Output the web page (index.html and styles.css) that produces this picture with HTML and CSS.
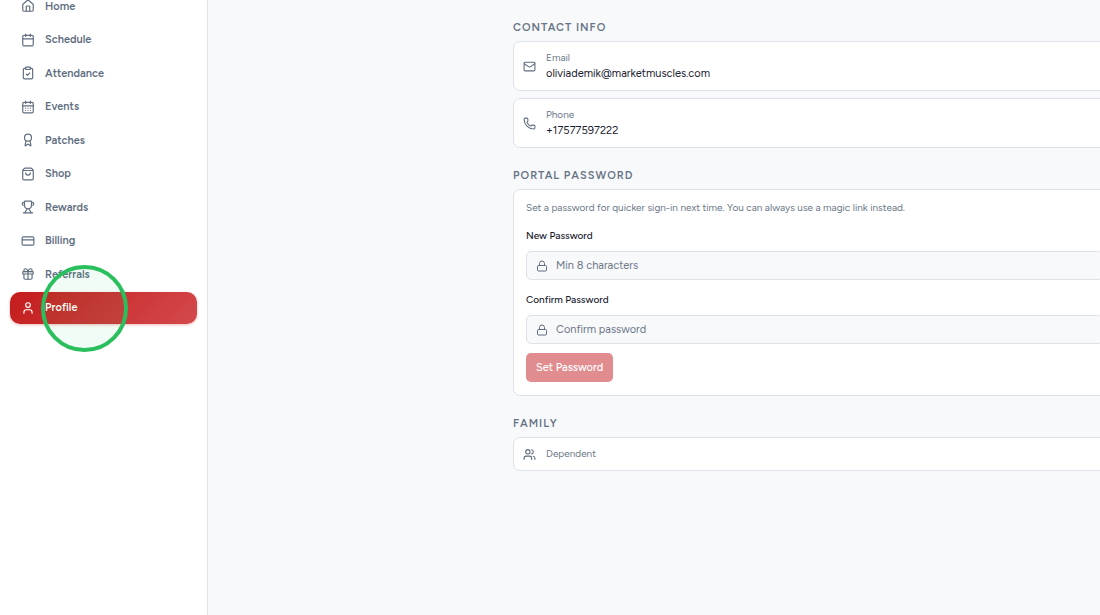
FILE: index.html
```html
<!DOCTYPE html>
<html lang="en">
  <head>
    <meta charset="UTF-8" />
    <meta name="viewport" content="width=device-width, initial-scale=1.0" />
    <title>Profile</title>
    <link rel="stylesheet" href="styles.css">
  </head>
  <body>
    <aside class="sidebar">
      <nav class="nav">
        <a class="nav-item" href="#home">
          <svg class="icon" viewBox="0 0 24 24"><path d="M15 21v-8a1 1 0 0 0-1-1h-4a1 1 0 0 0-1 1v8" /><path d="M3 10a2 2 0 0 1 .709-1.528l7-5.999a2 2 0 0 1 2.582 0l7 5.999A2 2 0 0 1 21 10v9a2 2 0 0 1-2 2H5a2 2 0 0 1-2-2z" /></svg>
          Home
        </a>
        <a class="nav-item" href="#schedule">
          <svg class="icon" viewBox="0 0 24 24"><path d="M8 2v4M16 2v4M3 10h18" /><rect x="3" y="4" width="18" height="18" rx="2" /></svg>
          Schedule
        </a>
        <a class="nav-item" href="#attendance">
          <svg class="icon" viewBox="0 0 24 24"><rect x="8" y="2" width="8" height="4" rx="1" /><path d="M16 4h2a2 2 0 0 1 2 2v14a2 2 0 0 1-2 2H6a2 2 0 0 1-2-2V6a2 2 0 0 1 2-2h2" /><path d="m9 14 2 2 4-4" /></svg>
          Attendance
        </a>
        <a class="nav-item" href="#events">
          <svg class="icon" viewBox="0 0 24 24"><path d="M8 2v4M16 2v4M3 10h18" /><rect x="3" y="4" width="18" height="18" rx="2" /><path d="M8 14h.01M12 14h.01M16 14h.01M8 18h.01M12 18h.01M16 18h.01" /></svg>
          Events
        </a>
        <a class="nav-item" href="#patches">
          <svg class="icon" viewBox="0 0 24 24"><path d="m15.477 12.89 1.515 8.526a.5.5 0 0 1-.81.47l-3.58-2.687a1 1 0 0 0-1.197 0l-3.586 2.686a.5.5 0 0 1-.81-.469l1.514-8.526" /><circle cx="12" cy="8" r="6" /></svg>
          Patches
        </a>
        <a class="nav-item" href="#shop">
          <svg class="icon" viewBox="0 0 24 24"><path d="M16 10a4 4 0 0 1-8 0" /><path d="M3.103 6.034h17.794" /><path d="M3.4 5.467a2 2 0 0 0-.4 1.2V20a2 2 0 0 0 2 2h14a2 2 0 0 0 2-2V6.667a2 2 0 0 0-.4-1.2l-2-2.667A2 2 0 0 0 17 2H7a2 2 0 0 0-1.6.8z" /></svg>
          Shop
        </a>
        <a class="nav-item" href="#rewards">
          <svg class="icon" viewBox="0 0 24 24"><path d="M10 14.66v1.626a2 2 0 0 1-.976 1.696A5 5 0 0 0 7 21.978" /><path d="M14 14.66v1.626a2 2 0 0 0 .976 1.696A5 5 0 0 1 17 21.978" /><path d="M18 9h1.5a2.5 2.5 0 0 0 0-5H18" /><path d="M4 22h16" /><path d="M6 9a6 6 0 0 0 12 0V3a1 1 0 0 0-1-1H7a1 1 0 0 0-1 1z" /><path d="M6 9H4.5a2.5 2.5 0 0 1 0-5H6" /></svg>
          Rewards
        </a>
        <a class="nav-item" href="#billing">
          <svg class="icon" viewBox="0 0 24 24"><rect x="2" y="5" width="20" height="14" rx="2" /><path d="M2 10h20" /></svg>
          Billing
        </a>
        <a class="nav-item" href="#referrals">
          <svg class="icon" viewBox="0 0 24 24"><rect x="3" y="8" width="18" height="4" rx="1" /><path d="M12 8v13" /><path d="M19 12v7a2 2 0 0 1-2 2H7a2 2 0 0 1-2-2v-7" /><path d="M7.5 8a2.5 2.5 0 0 1 0-5A4.8 8 0 0 1 12 8a4.8 8 0 0 1 4.5-5 2.5 2.5 0 0 1 0 5" /></svg>
          Referrals
        </a>
        <a class="nav-item active" href="#profile" aria-current="page">
          <svg class="icon" viewBox="0 0 24 24"><path d="M19 21v-2a4 4 0 0 0-4-4H9a4 4 0 0 0-4 4v2" /><circle cx="12" cy="7" r="4" /></svg>
          Profile
          <span class="click-ring"></span>
        </a>
      </nav>
    </aside>

    <main class="main">
      <div class="content">
        <section>
          <h2>CONTACT INFO</h2>
          <div class="card row">
            <svg class="icon small" viewBox="0 0 24 24"><path d="m22 7-8.991 5.727a2 2 0 0 1-2.009 0L2 7" /><rect x="2" y="4" width="20" height="16" rx="2" /></svg>
            <div>
              <p class="label">Email</p>
              <p>oliviademik@marketmuscles.com</p>
            </div>
          </div>
          <div class="card row">
            <svg class="icon small" viewBox="0 0 24 24"><path d="M13.832 16.568a1 1 0 0 0 1.213-.303l.355-.465A2 2 0 0 1 17 15h3a2 2 0 0 1 2 2v3a2 2 0 0 1-2 2A18 18 0 0 1 2 4a2 2 0 0 1 2-2h3a2 2 0 0 1 2 2v3a2 2 0 0 1-.8 1.6l-.468.351a1 1 0 0 0-.292 1.233 14 14 0 0 0 6.392 6.384" /></svg>
            <div>
              <p class="label">Phone</p>
              <p>+17577597222</p>
            </div>
          </div>
        </section>

        <section>
          <h2>PORTAL PASSWORD</h2>
          <form class="card password-form">
            <p class="hint">Set a password for quicker sign-in next time. You can always use a magic link instead.</p>
            <label for="new-password">New Password</label>
            <div class="field">
              <svg class="icon tiny" viewBox="0 0 24 24"><rect x="3" y="11" width="18" height="11" rx="2" /><path d="M7 11V7a5 5 0 0 1 10 0v4" /></svg>
              <input id="new-password" type="password" placeholder="Min 8 characters" />
            </div>
            <label for="confirm-password">Confirm Password</label>
            <div class="field">
              <svg class="icon tiny" viewBox="0 0 24 24"><rect x="3" y="11" width="18" height="11" rx="2" /><path d="M7 11V7a5 5 0 0 1 10 0v4" /></svg>
              <input id="confirm-password" type="password" placeholder="Confirm password" />
            </div>
            <button type="submit" disabled>Set Password</button>
          </form>
        </section>

        <section>
          <h2>FAMILY</h2>
          <div class="card row">
            <svg class="icon small" viewBox="0 0 24 24"><path d="M16 21v-2a4 4 0 0 0-4-4H6a4 4 0 0 0-4 4v2" /><circle cx="9" cy="7" r="4" /><path d="M16 3.128a4 4 0 0 1 0 7.744" /><path d="M22 21v-2a4 4 0 0 0-3-3.87" /></svg>
            <p class="label">Dependent</p>
          </div>
        </section>
      </div>
    </main>
  </body>
</html>
```
FILE: styles.css
```css
* {
  box-sizing: border-box;
}

body {
  margin: 0;
  font-family: Figtree, Inter, sans-serif;
  font-size: 11px;
  line-height: 16px;
  background-color: #f8f9fb;
  color: #18202e;
  display: flex;
  min-height: 100vh;
  overflow: hidden;
}

h2,
p {
  margin: 0;
}

.icon {
  width: 14px;
  height: 14px;
  flex: none;
  fill: none;
  stroke: currentColor;
  stroke-width: 2;
  stroke-linecap: round;
  stroke-linejoin: round;
}

.icon.small {
  width: 13px;
  height: 13px;
  color: #606d7e;
}

.icon.tiny {
  width: 12px;
  height: 12px;
  color: #606d7e;
}

/* sidebar */
.sidebar {
  width: 208px;
  flex: none;
  padding: 0 10px;
  background-color: #ffffff;
  border-right: 1px solid #dfe4ea;
}

/* list is scrolled slightly past the top */
.nav {
  display: flex;
  flex-direction: column;
  justify-content: space-between;
  height: 334px;
  margin-top: -10px;
}

.nav-item {
  display: flex;
  align-items: center;
  gap: 10px;
  height: 32px;
  padding: 0 11px;
  border-radius: 10px;
  line-height: 17px;
  font-weight: 600;
  color: #606d7e;
  text-decoration: none;
}

.nav-item.active {
  position: relative;
  color: #ffffff;
  background: linear-gradient(135deg, #c41c1c, #d3494c);
  box-shadow: 0 1px 3px rgba(196, 28, 28, 0.3);
}

.click-ring {
  position: absolute;
  left: 31px;
  top: -27px;
  width: 87px;
  height: 87px;
  border: 4px solid #2abf5d;
  border-radius: 50%;
  background-color: rgba(34, 197, 94, 0.06);
}

/* profile page */
.main {
  flex: 1;
  min-width: 0;
  padding: 19px 0 0 305px;
}

/* the column runs on past the window edge */
.content {
  display: flex;
  flex-direction: column;
  gap: 19px;
  margin-right: -16px;
}

h2 {
  margin-bottom: 4px;
  font-size: 11px;
  line-height: 18px;
  font-weight: 600;
  letter-spacing: 1px;
  color: #667385;
}

.card {
  background-color: #ffffff;
  border: 1px solid #dde2e8;
  border-radius: 7px;
}

.card + .card {
  margin-top: 7px;
}

.row {
  display: flex;
  align-items: center;
  gap: 10px;
  padding: 8px 9px;
}

.label,
.hint {
  font-size: 10px;
  color: #6b7787;
}

.password-form {
  display: flex;
  flex-direction: column;
  padding: 10px 12px 13px;
}

.password-form label {
  margin-top: 12px;
  font-size: 10px;
  font-weight: 500;
}

.field {
  display: flex;
  align-items: center;
  gap: 8px;
  height: 29px;
  margin-top: 7px;
  padding: 0 9px;
  background-color: #f8f9fb;
  border: 1px solid #dde2e8;
  border-radius: 5px;
}

.field input {
  flex: 1;
  padding: 0;
  border: none;
  outline: none;
  background: none;
  font: inherit;
  color: inherit;
}

.field input::placeholder {
  color: #6b7787;
  opacity: 1;
}

.password-form button {
  align-self: flex-start;
  height: 29px;
  margin-top: 9px;
  padding: 0 10px;
  border: none;
  border-radius: 5px;
  background-color: #e18d8f;
  color: #ffffff;
  font: inherit;
  font-weight: 500;
}
```
